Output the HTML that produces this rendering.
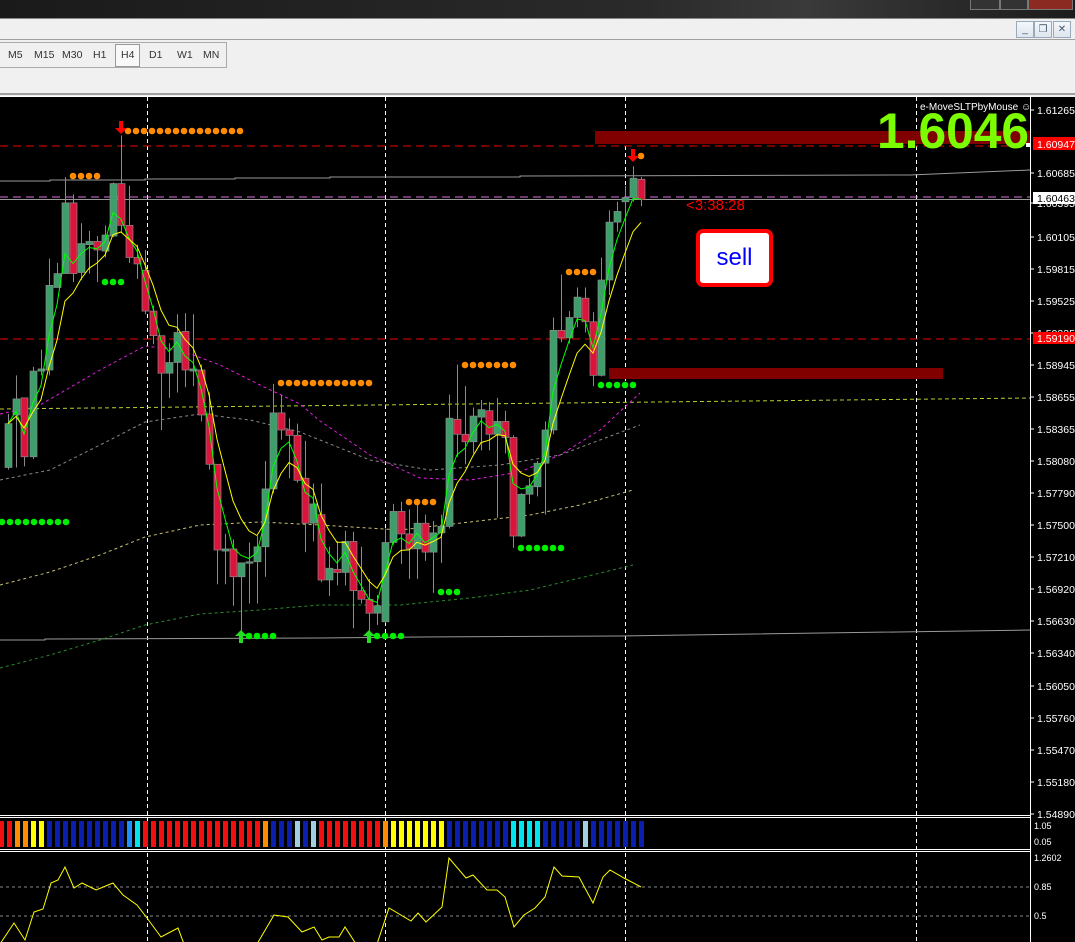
<!DOCTYPE html>
<html><head><meta charset="utf-8">
<style>
*{margin:0;padding:0;box-sizing:border-box}
body{width:1075px;height:942px;overflow:hidden;background:#000;font-family:"Liberation Sans",sans-serif;position:relative}
.top{position:absolute;left:0;top:0;width:1075px;height:18px;background:linear-gradient(90deg,#1a1a1a,#2a2a2a 60%,#3a3a3a 75%,#1c1c1c)}
.tb{position:absolute;left:0;top:18px;width:1075px;height:79px;background:#f0f0f0;border-top:1px solid #888}
.tb .l1{position:absolute;left:0;top:20px;width:1075px;height:1px;background:#a0a0a0}
.tb .l2{position:absolute;left:0;top:74px;width:1075px;height:2px;background:#a0a0a0}
.tf{position:absolute;left:0;top:23px;width:227px;height:26px;border:1px solid #aaa;border-left:none}
.tf span{position:absolute;top:6px;font-size:10.5px;color:#333}
.tf .h4{position:absolute;left:115px;top:1px;width:25px;height:23px;border:1px solid #999;background:#f8f8f8}
.wb{position:absolute;top:2px;width:18px;height:17px;border:1px solid #9ab;background:linear-gradient(#f4f7fb,#dde5ee);font-size:10px;text-align:center;color:#456;line-height:15px}
.tbtn{position:absolute;top:0;height:10px;border:1px solid #777;border-top:none;background:#333}
svg{position:absolute;left:0;top:0}
.ax{font-size:10.5px;fill:#fff}
.sell{position:absolute;left:696px;top:229px;width:77px;height:58px;background:#fff;border:4px solid #f00;border-radius:7px;color:#00f;font-size:24px;text-align:center;line-height:50px}
</style></head><body>
<div class="top"></div>
<div class="tbtn" style="left:970px;width:30px"></div>
<div class="tbtn" style="left:1000px;width:28px"></div>
<div class="tbtn" style="left:1028px;width:45px;background:#8a2a20"></div>
<div class="tb">
 <div class="l1"></div>
 <div class="wb" style="left:1016px">_</div>
 <div class="wb" style="left:1034px">❐</div>
 <div class="wb" style="left:1053px">✕</div>
 <div class="tf" style="top:23px">
  <div class="h4"></div>
  <span style="left:8px">M5</span><span style="left:34px">M15</span><span style="left:62px">M30</span><span style="left:93px">H1</span><span style="left:121px">H4</span><span style="left:149px">D1</span><span style="left:177px">W1</span><span style="left:203px">MN</span>
 </div>
 <div class="l2"></div>
</div>
<svg id="s" width="1075" height="942" style="top:0"></svg>
<div class="sell">sell</div>
<script>
const NS="http://www.w3.org/2000/svg";const s=document.getElementById('s');
function el(t,a,txt){const e=document.createElementNS(NS,t);for(const k in a)e.setAttribute(k,a[k]);if(txt)e.textContent=txt;s.appendChild(e);return e}
const f=y=>100+(y-100)*1.0714;
el('rect',{x:0,y:97,width:1075,height:845,fill:'#000'});
el('line',{x1:0,y1:96.5,x2:1030,y2:96.5,stroke:'#fff'});
el('line',{x1:1030.5,y1:96,x2:1030.5,y2:942,stroke:'#fff'});
[[815,817],[849,851]].forEach(p=>p.forEach(y=>el('line',{x1:0,y1:y+.5,x2:1030,y2:y+.5,stroke:'#fff'})));
[147,385,625,916].forEach(x=>el('line',{x1:x+.5,y1:97,x2:x+.5,y2:942,stroke:'#fff','stroke-dasharray':'4,3'}));
el('line',{x1:0,y1:146,x2:1030,y2:146,stroke:'#e00','stroke-dasharray':'8,5'});
el('line',{x1:0,y1:339,x2:1030,y2:339,stroke:'#e00','stroke-dasharray':'8,5'});
el('line',{x1:0,y1:197,x2:1030,y2:197,stroke:'#e070e0','stroke-dasharray':'8,5'});
el('line',{x1:0,y1:199.5,x2:1030,y2:199.5,stroke:'#999'});
el('polyline',{points:'0,181 50,181 50,180 145,180 145,179 235,179 235,178 330,178 330,177 520,177 520,176 910,175 1030,170',fill:'none',stroke:'#999'});
el('polyline',{points:'0,640 45,640 45,639 320,638 420,637 620,636 1030,630',fill:'none',stroke:'#999'});
el('line',{x1:0,y1:409,x2:1030,y2:398,stroke:'#b8d030','stroke-dasharray':'4,3'});
function pl(p,c){el('polyline',{points:p,fill:'none',stroke:c,'stroke-dasharray':'3,3'})}
pl('0,414 40,405 100,370 145,346 180,350 220,365 260,385 300,404 320,421 370,455 420,478 470,480 520,472 560,455 600,430 640,393','#e020e0');
pl('0,480 50,470 100,445 145,422 200,414 250,420 300,432 320,440 370,460 430,470 500,465 560,455 600,440 640,425','#888');
pl('0,585 50,572 100,555 145,537 200,525 260,522 320,525 400,530 470,522 530,515 580,505 633,490','#c8c070');
pl('0,668 50,655 100,640 145,625 200,614 260,610 320,605 400,605 470,598 530,590 580,578 633,565','#2a8a2a');
el('rect',{x:595,y:131,width:435,height:13,fill:'#800000'});
el('rect',{x:609,y:368,width:334,height:11,fill:'#800000'});
const D=[[8,'g',402,443,393,445],[16,'g',379,394,357,443],[24,'r',378,433,378,442],[33,'g',353,433,349,435],[41,'g',351,353,333,357],[49,'g',273,352,248,357],[57,'g',262,275,252,275],[65,'g',196,262,172,262],[73,'r',196,262,188,270],[81,'g',234,261,215,268],[89,'g',232,235,222,262],[97,'r',232,240,227,270],[105,'g',226,241,217,247],[113,'g',178,227,177,228],[121,'r',178,217,133,223],[129,'r',217,247,180,252],[137,'r',247,253,235,267],[145,'r',259,297,240,300],[153,'r',297,320,292,328],[161,'r',320,355,320,408],[169,'g',345,355,327,378],[177,'g',317,345,300,373],[185,'r',316,352,299,368],[193,'g',351,353,300,367],[201,'r',352,394,347,400],[209,'r',393,440,373,445],[217,'r',440,520,440,552],[225,'g',519,521,505,552],[233,'r',519,545,510,572],[241,'g',532,545,532,607],[249,'g',531,532,513,570],[257,'g',517,531,507,570],[265,'g',463,517,437,545],[273,'g',392,463,365,467],[281,'r',392,408,375,417],[289,'r',408,413,397,453],[297,'r',413,455,402,457],[305,'r',453,495,418,522],[313,'g',477,495,458,512],[321,'r',487,548,458,550],[329,'g',537,548,517,563],[337,'r',538,541,512,553],[345,'g',512,541,502,553],[353,'r',512,558,503,593],[361,'r',558,566,517,570],[369,'r',566,579,547,597],[377,'g',572,579,562,590],[385,'g',513,587,500,588],[393,'g',484,513,477,515],[401,'r',484,505,475,533],[409,'r',505,519,482,547],[417,'g',495,519,478,547],[425,'r',495,522,487,530],[433,'g',504,522,493,560],[441,'g',498,504,487,532],[449,'g',397,498,375,500],[457,'r',398,412,347,433],[465,'r',412,419,367,440],[473,'g',395,419,387,430],[481,'g',389,396,380,427],[489,'r',390,412,382,427],[497,'g',400,412,378,490],[505,'r',400,415,390,430],[513,'r',415,507,413,518],[521,'g',468,507,467,508],[529,'g',460,468,453,477],[537,'g',439,461,437,470],[545,'g',408,439,400,487],[553,'g',315,408,303,412],[561,'r',315,322,263,326],[569,'g',303,322,297,327],[577,'g',284,303,275,312],[585,'r',285,307,275,317],[593,'r',307,357,298,367],[601,'g',268,357,247,358],[609,'g',214,268,203,282],[617,'g',204,214,195,223],[625,'g',191,195,180,260],[633,'g',173,191,162,195],[641,'r',174,193,172,199]];
const closes=[];
D.forEach(d=>{const[x,t,bt,bb,wt,wb]=d;const y1=f(bt),y2=f(bb);
 el('line',{x1:x+.5,y1:f(wt),x2:x+.5,y2:f(wb),stroke:'#8a8a8a'});
 el('rect',{x:x-3,y:y1,width:7,height:Math.max(1.5,y2-y1),fill:t=='g'?'#3c9f6a':'#dc143c',stroke:'#8a8a8a','stroke-width':.7});
 closes.push([x,t=='g'?y1:y2]);});
function ema(n,c){let v=closes[0][1],p=[];const k=2/(n+1);closes.forEach(([x,y])=>{v=v+k*(y-v);p.push(x+','+v.toFixed(1))});el('polyline',{points:p.join(' '),fill:'none',stroke:c})}
ema(3,'#00ff00');ema(6,'#ffff00');
function dots(x0,x1,y,c){for(let x=x0;x<=x1;x+=8)el('circle',{cx:x,cy:y,r:3.3,fill:c})}
const O='#ff8c00',G='#00ee00';
dots(128,240,131,O);dots(73,97,176,O);dots(105,121,282,G);dots(2,66,522,G);dots(281,369,383,O);dots(465,513,365,O);dots(409,433,502,O);dots(441,457,592,G);dots(521,561,548,G);dots(569,593,272,O);dots(601,633,385,G);dots(641,641,156,O);dots(249,273,636,G);dots(377,401,636,G);
function arrow(x,y,c,up){const d=up?`M${x} ${y-7} l-6 6 h4 v7 h4 v-7 h4z`:`M${x} ${y+7} l-6 -6 h4 v-7 h4 v7 h4z`;el('path',{d:d,fill:c})}
arrow(121,127,'#f00',0);arrow(633,155,'#f00',0);arrow(241,637,'#22dd22',1);arrow(369,637,'#22dd22',1);
const L=[['1.61265',110],['1.60685',173],['1.60395',203],['1.60105',237],['1.59815',269],['1.59525',301],['1.59235',333],['1.58945',365],['1.58655',397],['1.58365',429],['1.58080',461],['1.57790',493],['1.57500',525],['1.57210',557],['1.56920',589],['1.56630',621],['1.56340',653],['1.56050',686],['1.55760',718],['1.55470',750],['1.55180',782],['1.54890',814]];
L.forEach(([t,y])=>{el('line',{x1:1030,y1:y,x2:1034,y2:y,stroke:'#fff'});el('text',{x:1037,y:y+4,class:'ax'},t)});
el('rect',{x:1033,y:137,width:42,height:13,fill:'#f00'});el('text',{x:1037,y:148,class:'ax'},'1.60947');
el('rect',{x:1033,y:332,width:42,height:12,fill:'#f00'});el('text',{x:1037,y:342,class:'ax'},'1.59190');
el('rect',{x:1033,y:192,width:42,height:12,fill:'#fff'});el('text',{x:1037,y:202,class:'ax',style:'fill:#000'},'1.60463');
el('rect',{x:1026,y:143,width:4,height:4,fill:'#fff'});
[['1.05',829],['0.05',845],['1.2602',861],['0.85',890],['0.5',919]].forEach(([t,y])=>el('text',{x:1034,y:y,class:'ax',style:'font-size:9px'},t));
el('text',{x:920,y:110,style:'font-size:10px;fill:#fff'},'e-MoveSLTPbyMouse ☺');
el('text',{x:877,y:148,textLength:152,lengthAdjust:'spacingAndGlyphs',style:'font-size:50px;font-weight:bold;fill:#7cfc00'},'1.6046');
el('text',{x:686,y:210,style:'font-size:15px;fill:#f00'},'<3:38:28');
const C={R:'#f01010',O:'#ff8c00',Y:'#ffff00',B:'#0a1fb0',D:'#1e90ff',C:'#00e5ee',L:'#a0d0e0'};
const seq='RROOYYBBBBBBBBBBDCRRRRRRRRRRRRRRROBBBLBLRRRRRRRROYYYYYYYBBBBBBBBCCCCBBBBBLBBBBBBB';
for(let i=0;i<seq.length;i++){el('rect',{x:i*8-1,y:821,width:5,height:26,fill:C[seq[i]]})}
el('line',{x1:0,y1:887,x2:1030,y2:887,stroke:'#888','stroke-dasharray':'3,3'});
el('line',{x1:0,y1:916,x2:1030,y2:916,stroke:'#888','stroke-dasharray':'3,3'});
el('polyline',{points:'0,944 14,923 25,940 34,912 43,909 51,883 58,880 65,867 74,888 82,883 96,890 113,883 123,895 137,905 147,918 161,937 178,928 184,944 257,944 274,915 288,917 302,932 314,927 322,940 329,937 339,937 345,927 356,944 377,944 389,908 411,921 418,913 426,922 442,907 449,858 466,878 473,875 487,890 497,890 505,897 514,927 524,915 535,908 545,897 554,867 562,876 579,877 593,903 603,877 610,870 624,878 641,887',fill:'none',stroke:'#ffff00'});
</script>
</body></html>
